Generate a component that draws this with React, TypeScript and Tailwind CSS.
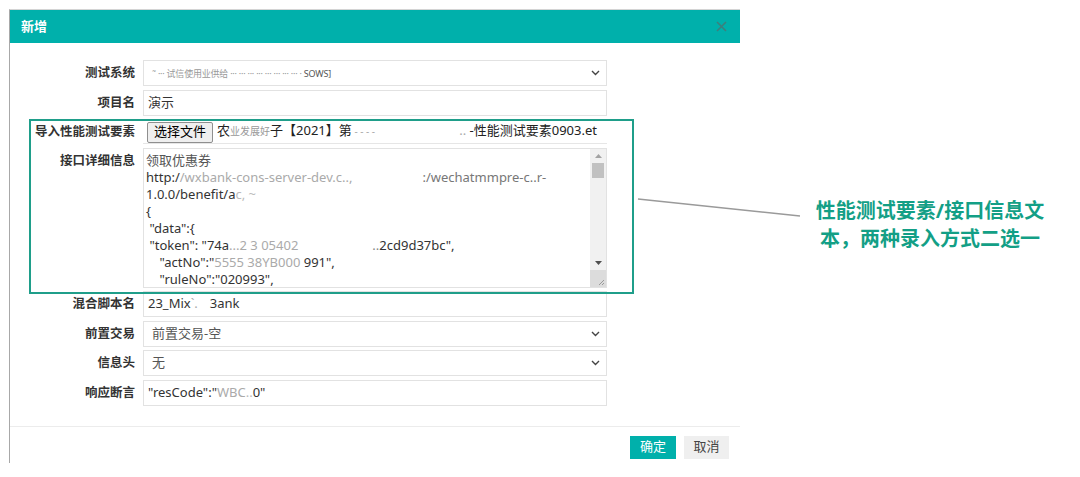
import React from 'react';

const cjk = '"Noto Sans", "Noto Sans CJK SC", sans-serif';

const Chevron: React.FC = () => (
  <svg width="9" height="6" viewBox="0 0 9 6" className="absolute right-[6px] top-1/2 -translate-y-1/2">
    <path d="M1 1 L4.5 4.5 L8 1" fill="none" stroke="#444" strokeWidth="1.4" />
  </svg>
);

const Row: React.FC<{ label: string; children: React.ReactNode; h?: string }> = ({ label, children, h = 'h-[26px]' }) => (
  <div className={`flex ${h}`}>
    <div className="w-[123px] shrink-0 pt-[4px] pr-[8px] text-right text-[12.5px] font-bold text-[#333] leading-[18px]">
      {label}
    </div>
    <div className="w-[464px] shrink-0 relative">{children}</div>
  </div>
);

const Box: React.FC<{ children?: React.ReactNode; select?: boolean; muted?: boolean }> = ({ children, select, muted }) => (
  <div
    className={`relative h-full border border-[#e2e2e2] bg-white flex items-center ${select ? 'pl-[8px]' : 'pl-[4px]'} text-[13px] ${
      muted ? 'text-[#555]' : 'text-[#333]'
    } whitespace-nowrap overflow-hidden`}
  >
    {children}
    {select && <Chevron />}
  </div>
);

const lines: React.ReactNode[] = [
  <span className="text-[#555]">领取优惠券</span>,
  <span>
    http:/<span className="text-[#aaa]">/wxbank-cons-server-dev.c..,</span>
    <span className="inline-block w-[70px]" />
    <span className="text-[#777]">:/wechatmmpre-c..r-</span>
  </span>,
  <span>
    1.0.0/benefit/a<span className="text-[#bbb]">c,  ~</span>
  </span>,
  <span>{'{'}</span>,
  <span>&nbsp;"data":{'{'}</span>,
  <span>
    &nbsp;"token": "74a<span className="text-[#aaa]">...2 3 05402</span>
    <span className="inline-block w-[74px]" />
    <span className="text-[#888]">..</span>2cd9d37bc",
  </span>,
  <span>
    &nbsp;&nbsp;&nbsp;&nbsp;"actNo":"<span className="text-[#aaa]">5555 38YB000 </span>991",
  </span>,
  <span>&nbsp;&nbsp;&nbsp;&nbsp;"ruleNo":"020993",</span>,
];

export default function App() {
  return (
    <div className="relative w-[1080px] h-[477px] bg-white overflow-hidden" style={{ fontFamily: cjk }}>
      <div className="ml-[9px] mt-[9px] w-[731px] h-[454px] border-t border-l border-t-[#d4d4d4] border-l-[#a8a8a8] flex flex-col">
        {/* header */}
        <div className="h-[33px] bg-[#00b0ab] flex items-center justify-between pl-[11px] pr-[13px]">
          <span className="text-white text-[13px] font-bold">新增</span>
          <svg width="11" height="11" viewBox="0 0 11 11">
            <path d="M1 1 L10 10 M10 1 L1 10" stroke="#3d7f7c" strokeWidth="1.6" />
          </svg>
        </div>

        {/* form */}
        <div className="pt-[17px] pl-[10px] flex flex-col gap-[3.5px]">
          <Row label="测试系统">
            <Box select>
              <span className="text-[9px] text-[#999] leading-[9px] tracking-tight">
                ˜ ··· 试信使用业供给 ··· ··· ··· ··· ··· ··· ··· ··· · <span className="text-[#555]">SOWS]</span>
              </span>
            </Box>
          </Row>
          <Row label="项目名">
            <Box>演示</Box>
          </Row>
          <Row label="导入性能测试要素" h="h-[25px]">
            <div className="h-full border-b border-[#e6e6e6] flex items-center pl-[4px] pr-[10px] text-[13px] text-[#222] whitespace-nowrap">
              <div className="h-[21px] px-[6px] mt-[2px] border border-[#8f8f8f] bg-[#efefef] rounded-[2px] flex items-center text-[13px] text-black">
                选择文件
              </div>
              <span className="ml-[4px]">
                农<span className="text-[#999] text-[10px]">业发展好</span>子【2021】第
                <span className="text-[#aaa] text-[10px]"> - - - -</span>
              </span>
              <span className="ml-auto">
                <span className="text-[#aaa]">.. </span>-性能测试要素0903.et
              </span>
            </div>
          </Row>
          <Row label="接口详细信息" h="h-[140px]">
            <div className="h-full border border-[#e2e2e2] bg-white flex">
              <div className="flex-1 pl-[2px] pt-[3px] text-[13px] leading-[17px] text-[#333] whitespace-nowrap overflow-hidden">
                {lines.map((l, i) => (
                  <div key={i}>{l}</div>
                ))}
              </div>
              <div className="w-[16px] bg-[#f1f1f1] flex flex-col items-center">
                <div className="h-[14px] flex items-center justify-center">
                  <svg width="7" height="4" viewBox="0 0 7 4">
                    <path d="M0 4 L3.5 0 L7 4 Z" fill="#a3a3a3" />
                  </svg>
                </div>
                <div className="w-[12px] h-[15px] bg-[#c1c1c1]" />
                <div className="flex-1" />
                <div className="h-[14px] flex items-center justify-center">
                  <svg width="7" height="4" viewBox="0 0 7 4">
                    <path d="M0 0 L3.5 4 L7 0 Z" fill="#505050" />
                  </svg>
                </div>
                <div className="w-[16px] h-[17px] bg-[#dcdcdc] relative">
                  <svg width="16" height="17" viewBox="0 0 16 17" className="absolute inset-0">
                    <path d="M14 10 L9 15 M14 13 L12 15" stroke="#999" strokeWidth="1" />
                  </svg>
                </div>
              </div>
            </div>
          </Row>
          <Row label="混合脚本名">
            <Box>
              23_Mix<span className="text-[#aaa]">`.</span>
              <span className="inline-block w-[12px]" />3ank
            </Box>
          </Row>
          <Row label="前置交易">
            <Box select muted>
              前置交易-空
            </Box>
          </Row>
          <Row label="信息头">
            <Box select muted>
              无
            </Box>
          </Row>
          <Row label="响应断言">
            <Box>
              "resCode":"<span className="text-[#aaa]">WBC</span>
              <span className="text-[#bbb]">..</span>0"
            </Box>
          </Row>
        </div>

        {/* footer */}
        <div className="mt-[20px] border-t border-[#ececec] flex justify-end gap-[8px] pt-[9px] pr-[11px]">
          <button className="w-[46px] h-[23px] bg-[#00b0ab] text-white text-[13px] flex items-center justify-center">
            确定
          </button>
          <button className="w-[45px] h-[23px] bg-[#efefef] text-[#444] text-[13px] flex items-center justify-center">
            取消
          </button>
        </div>
      </div>

      {/* annotation highlight */}
      <div className="absolute left-[29px] top-[119px] w-[605px] h-[175px] border-2 border-[#1f9e8a] pointer-events-none" />
      <svg className="absolute left-0 top-0 pointer-events-none" width="1080" height="477">
        <line x1="638" y1="199" x2="800" y2="216" stroke="#9a9a9a" strokeWidth="1.5" />
      </svg>
      <div className="absolute left-[800px] top-[197px] w-[260px] text-center text-[20px] font-bold leading-[28px] text-[#139f86]">
        性能测试要素/接口信息文
        <br />
        本，两种录入方式二选一
      </div>
    </div>
  );
}
